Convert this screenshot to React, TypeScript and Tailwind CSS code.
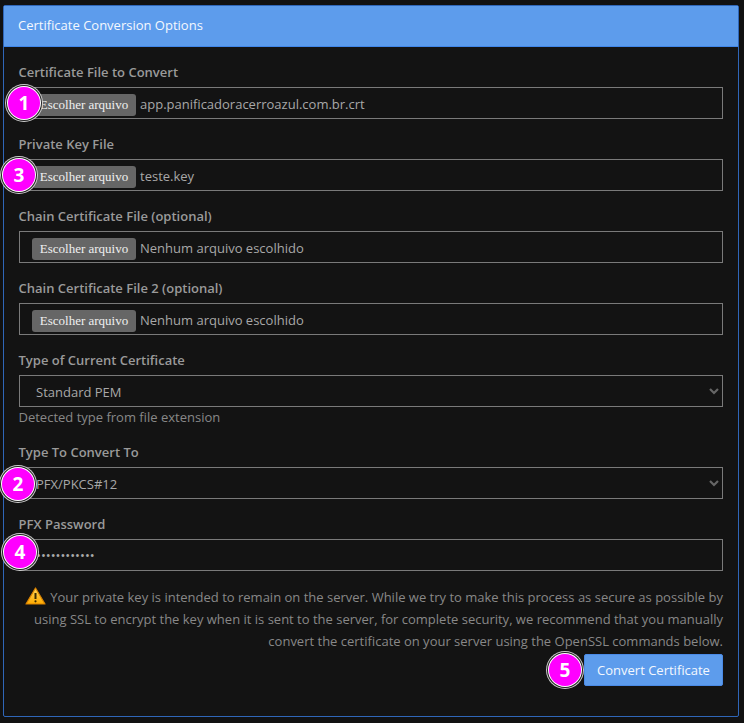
import React from "react";

function Badge({ n, className }: { n: number; className: string }) {
  return (
    <span className={`absolute z-10 flex h-[32px] w-[32px] items-center justify-center rounded-full bg-[#ff00ff] text-[19px] font-bold text-white shadow-[0_0_0_1px_#ffffff,0_0_0_2px_#222222,0_0_0_3px_#cccccc] ${className}`}>
      {n}
    </span>
  );
}

function Label({ children }: { children: React.ReactNode }) {
  return <div className="mb-[4px] ml-[-0.5px] h-[22px] text-[13px] font-semibold leading-[22px] text-[#9a9a9a]">{children}</div>;
}

function FileField({ label, value, badge }: { label: string; value: string; badge?: React.ReactNode }) {
  return (
    <div className="relative mb-[14px]">
      <Label>{label}</Label>
      <div className="flex h-[32px] items-center border border-[#7a7a7a] pl-[12px] pt-[4px] text-[13px] text-[#a8a8a8]">
        <span className="mr-[4px] flex h-[22px] w-[104px] items-center justify-center rounded-[3px] bg-[#666666] font-['Liberation_Serif',serif] text-[13px] text-[#f0f0f0]">
          Escolher arquivo
        </span>
        <span>{value}</span>
      </div>
      {badge}
    </div>
  );
}

function Chevron() {
  return (
    <svg className="absolute right-[2px] top-[11px]" width="12" height="9" viewBox="0 0 12 9" fill="none">
      <path d="M2 2 L6 6 L10 2" stroke="#666666" strokeWidth="2.2" />
    </svg>
  );
}

function SelectField({ label, value, hint, badge }: { label: string; value: string; hint?: string; badge?: React.ReactNode }) {
  return (
    <div className="relative mb-[14px]">
      <Label>{label}</Label>
      <div className="relative flex h-[32px] items-center border border-[#7a7a7a] pl-[16px] pt-[4px] text-[13px] text-[#a8a8a8]">
        {value}
        <Chevron />
      </div>
      {hint && <div className="ml-[-0.5px] h-[20px] text-[13px] leading-[20px] text-[#888888]">{hint}</div>}
      {badge}
    </div>
  );
}

export default function App() {
  return (
    <div className="h-[723px] w-[744px] overflow-hidden bg-[#111111] pl-[3px] pt-[5px] font-['Open_Sans',sans-serif]">
      <div className="h-[712px] w-[736px] rounded-[2px] border border-[#2f66b8] bg-[#131313]">
        <div className="flex h-[41px] items-center border-b border-[#3f86ea] bg-[#5d9cec] pl-[14px] text-[13px] text-[#f4f8fe]">
          Certificate Conversion Options
        </div>
        <div className="px-[15px] pt-[14px]">
          <FileField label="Certificate File to Convert" value="app.panificadoracerroazul.com.br.crt" badge={<Badge n={1} className="left-[-11px] top-[26px]" />} />
          <FileField label="Private Key File" value="teste.key" badge={<Badge n={3} className="left-[-16px] top-[26px]" />} />
          <FileField label="Chain Certificate File (optional)" value="Nenhum arquivo escolhido" />
          <FileField label="Chain Certificate File 2 (optional)" value="Nenhum arquivo escolhido" />
          <SelectField label="Type of Current Certificate" value="Standard PEM" hint="Detected type from file extension" />
          <SelectField label="Type To Convert To" value="PFX/PKCS#12" badge={<Badge n={2} className="left-[-17px] top-[27px]" />} />
          <div className="relative mb-[15px]">
            <Label>PFX Password</Label>
            <div className="flex h-[32px] items-center border border-[#7a7a7a] pl-[16px] pt-[2px] text-[13px] text-[#a8a8a8]">
              ••••••••••••
            </div>
            <Badge n={4} className="left-[-15px] top-[23px]" />
          </div>
          <p className="text-right text-[13px] leading-[22px] text-[#888888]">
            <svg className="mr-[4px] inline-block align-[-3px]" width="21" height="18" viewBox="0 0 21 18">
              <defs>
                <linearGradient id="w" x1="0" y1="0" x2="0" y2="1">
                  <stop offset="0" stopColor="#ffd75a" />
                  <stop offset="1" stopColor="#ffab00" />
                </linearGradient>
              </defs>
              <path d="M10.5 1 L20 17 L1 17 Z" fill="url(#w)" stroke="#d98200" strokeWidth="1.2" strokeLinejoin="round" />
              <path d="M10.5 6 V12" stroke="#3a2a00" strokeWidth="2" />
              <circle cx="10.5" cy="14.3" r="1.1" fill="#3a2a00" />
            </svg>
            Your private key is intended to remain on the server. While we try to make this process as secure as possible by using SSL to encrypt the key when it is sent to the server, for complete security, we recommend that you manually convert the certificate on your server using the OpenSSL commands below.
          </p>
          <div className="relative mt-[2px] flex justify-end">
            <button className="h-[32px] w-[139px] rounded-[2px] border border-[#4a8ae6] bg-[#5d9cec] pt-[1px] text-[13px] text-[#f4f8fe]">
              Convert Certificate
            </button>
            <Badge n={5} className="left-[530px] top-[0px]" />
          </div>
        </div>
      </div>
    </div>
  );
}
